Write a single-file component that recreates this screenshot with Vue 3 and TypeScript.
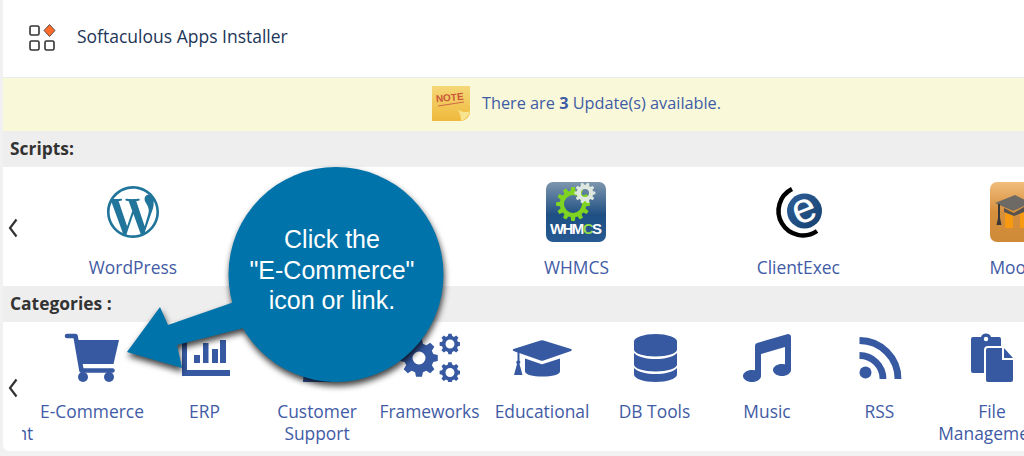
<script setup lang="ts">
// Builds a toothed gear outline, with the hole cut out through fill-rule evenodd
const gear = (cx: number, cy: number, r: number, hole: number, teeth: number) => {
  const inner = r * 0.78;
  const step = (Math.PI * 2) / teeth;
  const pts: string[] = [];
  for (let i = 0; i < teeth; i++) {
    const a = i * step;
    const corners: [number, number][] = [
      [inner, a - step * 0.34],
      [r, a - step * 0.2],
      [r, a + step * 0.2],
      [inner, a + step * 0.34],
    ];
    for (const [rad, ang] of corners) {
      pts.push(`${(cx + rad * Math.cos(ang)).toFixed(2)} ${(cy + rad * Math.sin(ang)).toFixed(2)}`);
    }
  }
  const holePath = `M${cx - hole} ${cy}a${hole} ${hole} 0 1 0 ${hole * 2} 0a${hole} ${hole} 0 1 0 ${-hole * 2} 0z`;
  return `M${pts.join('L')}z${holePath}`;
};

const bigGear = gear(418, 358, 19, 6.5, 8);
const topGear = gear(449, 344, 10.5, 4.5, 8);
const lowGear = gear(449, 372.5, 10.5, 4.5, 8);
const whmcsGreen = gear(27, 22, 17, 9, 12);
const whmcsWhite = gear(39, 11, 10.5, 4, 10);

const wordpressPath =
  'M21.469 6.825c.84 1.537 1.318 3.3 1.318 5.175 0 3.979-2.156 7.456-5.363 9.325l3.295-9.527c.615-1.54.82-2.771.82-3.864 0-.405-.026-.78-.07-1.11m-7.981.105c.647-.03 1.232-.105 1.232-.105.582-.075.514-.93-.067-.899 0 0-1.755.135-2.88.135-1.064 0-2.85-.15-2.85-.15-.585-.03-.661.855-.075.885 0 0 .54.061 1.125.09l1.68 4.605-2.37 7.08L5.354 6.9c.649-.03 1.234-.1 1.234-.1.585-.075.516-.93-.065-.896 0 0-1.746.138-2.874.138-.2 0-.438-.008-.69-.015C4.911 3.15 8.235 1.215 12 1.215c2.809 0 5.365 1.072 7.286 2.833-.046-.003-.091-.009-.141-.009-1.06 0-1.812.923-1.812 1.914 0 .89.513 1.643 1.06 2.531.411.72.89 1.643.89 2.977 0 .915-.354 1.994-.821 3.479l-1.075 3.585-3.9-11.61.001.014zM12 22.784c-1.059 0-2.081-.153-3.048-.437l3.237-9.406 3.315 9.087c.024.053.05.101.078.149-1.12.393-2.325.609-3.582.609M1.211 12c0-1.564.336-3.05.935-4.39L7.29 21.709C3.694 19.96 1.212 16.271 1.211 12M12 0C5.385 0 0 5.385 0 12s5.385 12 12 12 12-5.385 12-12S18.615 0 12 0';

const musicPath =
  'M470.38 1.51L150.41 96A32 32 0 0 0 128 126.51v261.41A139 139 0 0 0 96 384c-53 0-96 28.66-96 64s43 64 96 64 96-28.66 96-64V214.32l256-75v184.61a138.4 138.4 0 0 0-32-3.93c-53 0-96 28.66-96 64s43 64 96 64 96-28.65 96-64V32a32 32 0 0 0-41.62-30.49z';
</script>

<template>
  <div class="page">
    <div class="panel">
      <header class="top">
        <svg class="top-icon" viewBox="28 22 28 30">
          <rect x="30" y="26" width="9" height="9" rx="1.5" fill="none" stroke="#333" stroke-width="1.6" />
          <rect x="30" y="41" width="9" height="9" rx="1.5" fill="none" stroke="#333" stroke-width="1.6" />
          <rect x="45" y="41" width="9" height="9" rx="1.5" fill="none" stroke="#333" stroke-width="1.6" />
          <path d="M49.5 24.500l5.500 6-5.500 6-5.500-6z" fill="#ff6c2c" stroke="#333" stroke-width="0.8" />
        </svg>
        <span class="top-title">Softaculous Apps Installer</span>
      </header>

      <div class="notice">
        <svg class="note" viewBox="0 0 38 37">
          <defs>
            <linearGradient id="noteBg" x1="0" y1="0" x2="0" y2="1">
              <stop offset="0" stop-color="#f5d778" />
              <stop offset="1" stop-color="#efb93b" />
            </linearGradient>
          </defs>
          <path d="M0 1h38v27c-1 4-4 7-8 8H0z" fill="url(#noteBg)" />
          <path d="M38 26c-3 2-8 1-12-1 2 3 3 7 3 11 4-1 8-5 9-10z" fill="#f8e48e" />
          <text x="18" y="16" class="note-text" transform="rotate(-5 18 16)">NOTE</text>
          <path d="M6 21l26-4" stroke="#d0694a" stroke-width="1.2" />
        </svg>
        <span>There are <b>3</b> Update(s) available.</span>
      </div>

      <div class="bar">Scripts:</div>
      <section class="row scripts">
        <div class="back">
          <svg viewBox="0 0 10 20"><path d="M8.500 1.500L2 10l6.500 8.500" /></svg>
        </div>
        <div class="viewport">
          <div class="track">
            <a class="item wide">
              <span class="slot">
                <svg class="logo" viewBox="-1.850 -1.850 27.700 27.700">
                  <circle cx="12" cy="12" r="12" fill="#fff" />
                  <path :d="wordpressPath" fill="#21759b" />
                </svg>
              </span>
              <span class="name">WordPress</span>
            </a>
            <a class="item wide"></a>
            <a class="item wide">
              <span class="slot">
                <svg class="logo" viewBox="0 0 60 60">
                  <defs>
                    <linearGradient id="whmcsBg" x1="0" y1="0" x2="0" y2="1">
                      <stop offset="0" stop-color="#7d96ae" />
                      <stop offset="0.55" stop-color="#1f4f83" />
                      <stop offset="1" stop-color="#265a92" />
                    </linearGradient>
                  </defs>
                  <rect width="60" height="60" rx="7" fill="url(#whmcsBg)" />
                  <path :d="whmcsGreen" fill="#7fd321" fill-rule="evenodd" />
                  <path :d="whmcsWhite" fill="#dfe8df" fill-rule="evenodd" />
                  <text x="30" y="52" class="whmcs-text" textLength="52">WHM<tspan fill="#8fd94a">C</tspan>S</text>
                </svg>
              </span>
              <span class="name">WHMCS</span>
            </a>
            <a class="item wide">
              <span class="slot">
                <svg class="logo" viewBox="0 0 60 60">
                  <defs>
                    <linearGradient id="ceBg" x1="0" y1="0" x2="1" y2="1">
                      <stop offset="0" stop-color="#2f5f98" />
                      <stop offset="1" stop-color="#14406f" />
                    </linearGradient>
                  </defs>
                  <path d="M24 7A24.500 24.500 0 1 0 49 49" fill="none" stroke="#000" stroke-width="4.500" />
                  <circle cx="36.500" cy="29" r="17.500" fill="url(#ceBg)" />
                  <text x="36.500" y="40" class="ce-text" transform="rotate(-22 36.500 29)">e</text>
                </svg>
              </span>
              <span class="name">ClientExec</span>
            </a>
            <a class="item wide">
              <span class="slot">
                <svg class="logo" viewBox="0 0 60 60">
                  <defs>
                    <linearGradient id="moodleBg" x1="0" y1="0" x2="0" y2="1">
                      <stop offset="0" stop-color="#f1bd7c" />
                      <stop offset="0.5" stop-color="#d68f3c" />
                      <stop offset="1" stop-color="#cf8a38" />
                    </linearGradient>
                  </defs>
                  <rect width="60" height="60" rx="7" fill="url(#moodleBg)" />
                  <path d="M15 29l8-3v20h-8zM30 29l8-3v20h-8z" fill="#f79a12" />
                  <path d="M5 21l20-8 16 8-18 8z" fill="#6d6a66" />
                  <path d="M14 26l10 5 10-6v5l-10 4-10-4z" fill="#55524f" />
                  <path d="M8 22h2v14l1.500 7h-5l1.500-7z" fill="#3a3836" />
                </svg>
              </span>
              <span class="name">Moodle</span>
            </a>
          </div>
        </div>
      </section>

      <div class="bar">Categories :</div>
      <section class="row cats">
        <div class="back">
          <svg viewBox="0 0 10 20"><path d="M8.500 1.500L2 10l6.500 8.500" /></svg>
        </div>
        <div class="viewport">
          <div class="track shifted">
            <a class="item"><span class="slot small"></span><span class="name">Project Management</span></a>

            <a class="item">
              <span class="slot small">
                <svg class="cat" viewBox="62 332 60 50">
                  <path d="M67 336h8.500l6 34.500h31" fill="none" stroke="#3659a2" stroke-width="4.600" stroke-linecap="round" stroke-linejoin="round" />
                  <path d="M76 340h43l-5.500 24H80.500z" />
                  <circle cx="83" cy="377" r="5" />
                  <circle cx="109" cy="377" r="5" />
                </svg>
              </span>
              <span class="name">E-Commerce</span>
            </a>

            <a class="item">
              <span class="slot small">
                <svg class="cat" viewBox="174 332 60 50">
                  <path d="M181 340h5v30h43v6h-48zM193 355h6v8h-6zM202 343h5.500v20H202zM211 349h6v14h-6zM219 340h6v23h-6z" />
                </svg>
              </span>
              <span class="name">ERP</span>
            </a>

            <a class="item">
              <span class="slot small">
                <svg class="cat" viewBox="287 332 60 50">
                  <circle cx="317" cy="346" r="13" />
                  <path d="M303 382c0-12 6-20 14-20s14 8 14 20z" />
                </svg>
              </span>
              <span class="name">Customer Support</span>
            </a>

            <a class="item">
              <span class="slot small">
                <svg class="cat" viewBox="399 332 60 50">
                  <path :d="bigGear" fill-rule="evenodd" />
                  <path :d="topGear" fill-rule="evenodd" />
                  <path :d="lowGear" fill-rule="evenodd" />
                </svg>
              </span>
              <span class="name">Frameworks</span>
            </a>

            <a class="item">
              <span class="slot small">
                <svg class="cat" viewBox="512 332 60 50">
                  <path d="M540.500 340.500q1.500-.5 3 0l27.500 8.500q1.500 1 0 2l-27.500 9.500q-1.500.5-3 0l-27-9.500q-1.500-1 0-2z" />
                  <path d="M525 358.500l16 5.500q1 .4 2 0l17-5.500v13c0 3-8 5-17.500 5s-17.500-2-17.500-5z" />
                  <path d="M517.500 351.500h2v9l1 1.500-1 2 3 11h-8.500l3-11-1-2 1.500-1.500z" />
                </svg>
              </span>
              <span class="name">Educational</span>
            </a>

            <a class="item">
              <span class="slot small">
                <svg class="cat" viewBox="624 332 60 50">
                  <ellipse cx="654.500" cy="341.500" rx="21.500" ry="7.500" />
                  <path d="M633 341.500h43v8c0 4-9.600 7-21.500 7s-21.500-3-21.500-7z" />
                  <path d="M633 353c4 4 12.500 6 21.500 6s17.500-2 21.500-6v11.500c0 4-9.600 7-21.500 7s-21.500-3-21.500-7z" />
                  <path d="M633 368c4 4 12.500 6 21.500 6s17.500-2 21.500-6v6.500c0 4-9.600 7.500-21.500 7.500s-21.500-3.500-21.500-7.500z" />
                </svg>
              </span>
              <span class="name">DB Tools</span>
            </a>

            <a class="item">
              <span class="slot small">
                <svg class="cat" viewBox="737 332 60 50">
                  <path :d="musicPath" transform="translate(743 334) scale(0.09375)" />
                </svg>
              </span>
              <span class="name">Music</span>
            </a>

            <a class="item">
              <span class="slot small">
                <svg class="cat" viewBox="849 332 60 50">
                  <circle cx="864.500" cy="372.500" r="6" />
                  <path d="M858.500 355.500a23.500 23.500 0 0 1 23.500 23.500M858.500 340.500a38.500 38.500 0 0 1 38.500 38.500" fill="none" stroke="#3659a2" stroke-width="6.800" />
                </svg>
              </span>
              <span class="name">RSS</span>
            </a>

            <a class="item">
              <span class="slot small">
                <svg class="cat" viewBox="962 332 60 50">
                  <path d="M973 337h8q1-3.500 5-3.500t5 3.500h8q2 0 2 2v7h-13q-4 0-4 4v23h-11q-2 0-2-2v-32q0-2 2-2z" />
                  <circle cx="986" cy="339" r="2.200" fill="#fff" />
                  <path d="M988 348h14v12h11v20q0 2-2 2h-23q-2 0-2-2v-30q0-2 2-2z" />
                  <path d="M1004 348l9 10h-9z" />
                </svg>
              </span>
              <span class="name">File Management</span>
            </a>
          </div>
        </div>
      </section>
    </div>

    <!-- Tutorial callout drawn over the page -->
    <svg class="callout" viewBox="0 0 1024 456">
      <g class="callout-shape">
        <path d="M127 352l33-45 8 18 72-25 12 26-75 19 5 23z" />
        <circle cx="336" cy="274.500" r="107.500" />
      </g>
    </svg>
    <div class="callout-text">Click the<br />"E-Commerce"<br />icon or link.</div>
  </div>
</template>

<style scoped>
.page {
  position: relative;
  width: 1024px;
  height: 456px;
  overflow: hidden;
  padding-left: 3px;
  box-sizing: border-box;
  background: #f1f1f1;
  font-family: "Open Sans", sans-serif;
}

.panel {
  background: #fff;
  height: 451px;
  border-bottom-left-radius: 6px;
  overflow: hidden;
}

.top {
  height: 78px;
  display: flex;
  align-items: center;
  gap: 21px;
  padding-left: 25px;
  box-sizing: border-box;
  border-bottom: 1px solid #e6eeee;
}

.top-icon {
  width: 28px;
  height: 30px;
  margin-top: -4px;
}

.top-title {
  font-size: 17.5px;
  color: #1d3557;
  margin-top: -5px;
}

.notice {
  height: 53px;
  box-sizing: border-box;
  background: #f9f9d9;
  display: flex;
  align-items: center;
  justify-content: center;
  gap: 12px;
  padding: 0 0 3px 126px;
  font-size: 16.3px;
  color: #3f5ba5;
}

.note {
  width: 38px;
  height: 37px;
}

.note-text {
  font: bold 10px "Liberation Sans", sans-serif;
  fill: #c9553a;
  text-anchor: middle;
}

.bar {
  height: 36px;
  line-height: 35px;
  padding-left: 7px;
  background: #eee;
  font-size: 17.4px;
  font-weight: 700;
  color: #333;
}

.row {
  display: flex;
  align-items: stretch;
}

.scripts {
  height: 119px;
}

.cats {
  height: 129px;
}

.back {
  width: 19px;
  flex: none;
  display: flex;
  align-items: center;
  padding: 3px 0 0 5px;
  box-sizing: border-box;
}

.back svg {
  width: 10px;
  height: 20px;
}

.back path {
  fill: none;
  stroke: #333;
  stroke-width: 2.2;
}

.viewport {
  flex: 1;
  min-width: 0;
  overflow: hidden;
}

.track {
  display: flex;
}

.track.shifted {
  margin-left: -98.75px;
}

.item {
  flex: none;
  width: 112.5px;
  display: flex;
  flex-direction: column;
  align-items: center;
  text-align: center;
  color: #3f5ba5;
  font-size: 17.4px;
  line-height: 22px;
}

.item.wide {
  width: 221.8px;
}

.slot {
  height: 60px;
  margin: 15px 0 14px;
  display: flex;
  justify-content: center;
}

.slot.small {
  height: 50px;
  margin: 10px 0 18px;
}

.logo {
  width: 60px;
  height: 60px;
}

.cat {
  width: 60px;
  height: 50px;
  fill: #3659a2;
}

.whmcs-text {
  font: bold 15px "Liberation Sans", sans-serif;
  fill: #fff;
  text-anchor: middle;
}

.ce-text {
  font: 42px "Liberation Sans", sans-serif;
  fill: #fff;
  text-anchor: middle;
}

.callout {
  position: absolute;
  left: 0;
  top: 0;
  width: 1024px;
  height: 456px;
  overflow: visible;
  pointer-events: none;
}

.callout-shape {
  fill: #0073aa;
  filter: drop-shadow(1px 4px 3px rgba(0, 0, 0, 0.75));
}

.callout-text {
  position: absolute;
  left: 232px;
  top: 224px;
  width: 200px;
  text-align: center;
  font: 25px/30.5px "Liberation Sans", sans-serif;
  color: #fff;
}
</style>
